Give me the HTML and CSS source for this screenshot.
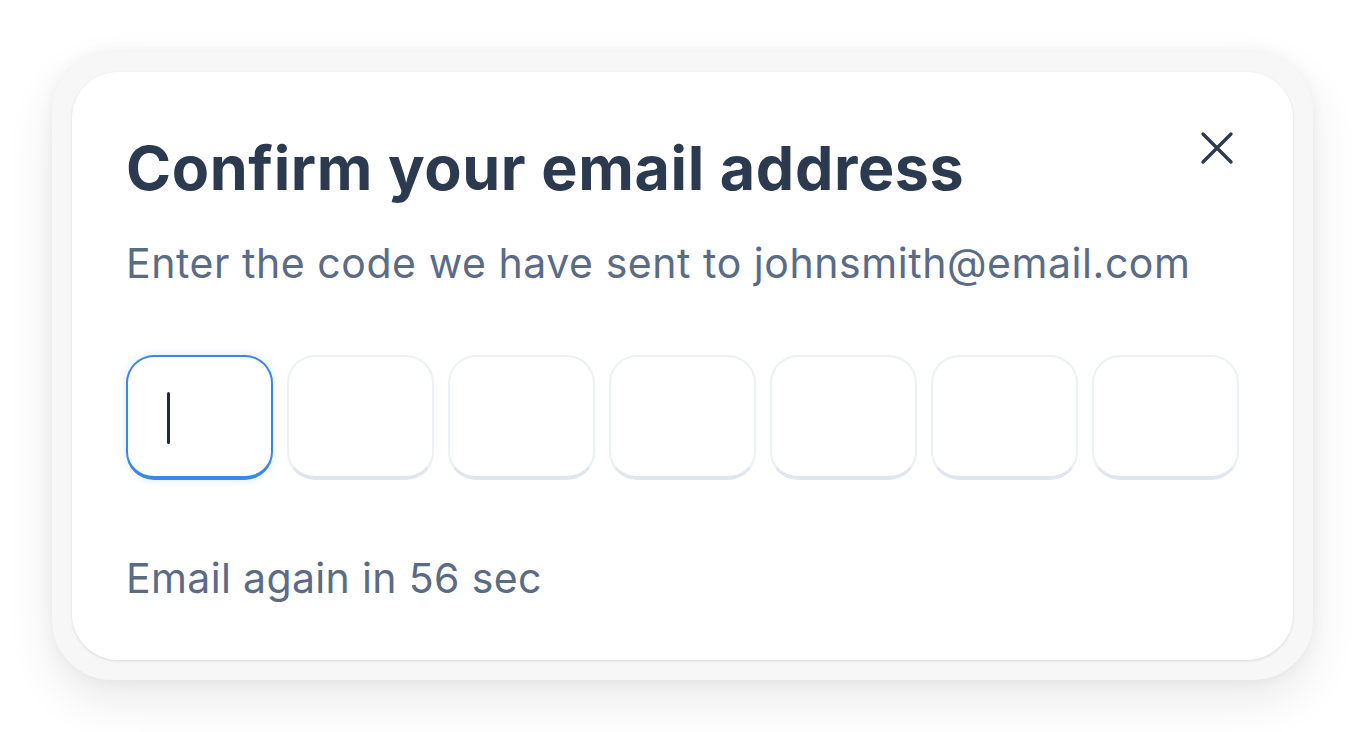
FILE: index.html
```html
<!DOCTYPE html>
<html lang="en">
<head>
<meta charset="utf-8">
<title>Confirm your email address</title>
<link rel="stylesheet" href="styles.css">
</head>
<body>
<div class="frame">
  <div class="card">
    <button class="close" aria-label="Close">
      <svg width="34" height="34" viewBox="0 0 34 34" fill="none"><path d="M3 3L31 31M31 3L3 31" stroke="#2c3a4f" stroke-width="3.4" stroke-linecap="round"/></svg>
    </button>
    <h1 class="title">Confirm your email address</h1>
    <p class="subtitle">Enter the code we have sent to johnsmith@email.com</p>
    <div class="code">
      <div class="box box-active"><span class="caret"></span></div>
      <div class="box"></div>
      <div class="box"></div>
      <div class="box"></div>
      <div class="box"></div>
      <div class="box"></div>
      <div class="box"></div>
    </div>
    <p class="resend">Email again in 56 sec</p>
  </div>
</div>
</body>
</html>
```
FILE: styles.css
```css
html, body {
  margin: 0;
  padding: 0;
  background: #ffffff;
}
body {
  padding: 52px;
  font-family: Inter, "Noto Sans", sans-serif;
}
.frame {
  height: 628px;
  box-sizing: border-box;
  background: #f7f7f7;
  border-radius: 60px;
  padding: 20px;
  box-shadow: 0 20px 48px rgba(0, 0, 0, 0.09), 0 0 14px rgba(0, 0, 0, 0.05);
}
.card {
  position: relative;
  height: 100%;
  box-sizing: border-box;
  background: #ffffff;
  border-radius: 46px;
  padding: 58px 54px 0 54px;
  box-shadow: 0 1px 3px rgba(0, 0, 0, 0.12);
}
.close {
  position: absolute;
  top: 58px;
  right: 58px;
  width: 36px;
  height: 36px;
  padding: 1px;
  border: 0;
  background: none;
}
.title {
  margin: 0;
  font-size: 61px;
  line-height: 76px;
  font-weight: 700;
  color: #2c3a4f;
  letter-spacing: 0.6px;
}
.subtitle {
  margin: 32px 0 0 0;
  font-size: 41px;
  line-height: 50px;
  font-weight: 400;
  color: #5b6b84;
  letter-spacing: 0.55px;
}
.code {
  display: flex;
  gap: 14px;
  margin-top: 67px;
}
.box {
  width: 147px;
  height: 125px;
  box-sizing: border-box;
  border: 2px solid #edf0f5;
  border-bottom: 4px solid #e1e6ee;
  border-radius: 28px;
  background: #ffffff;
  display: flex;
  align-items: center;
}
.box-active {
  border: 2px solid #3b86e6;
  border-bottom: 4px solid #3b86e6;
  box-shadow: 0 0 8px rgba(59, 134, 230, 0.18);
}
.caret {
  display: block;
  width: 3px;
  height: 52px;
  margin-left: 39px;
  margin-top: 2px;
  background: #1f2a3a;
  border-radius: 1.5px;
}
.resend {
  margin: 73px 0 0 0;
  font-size: 41px;
  line-height: 50px;
  color: #5b6b84;
  letter-spacing: 0.35px;
}
```
